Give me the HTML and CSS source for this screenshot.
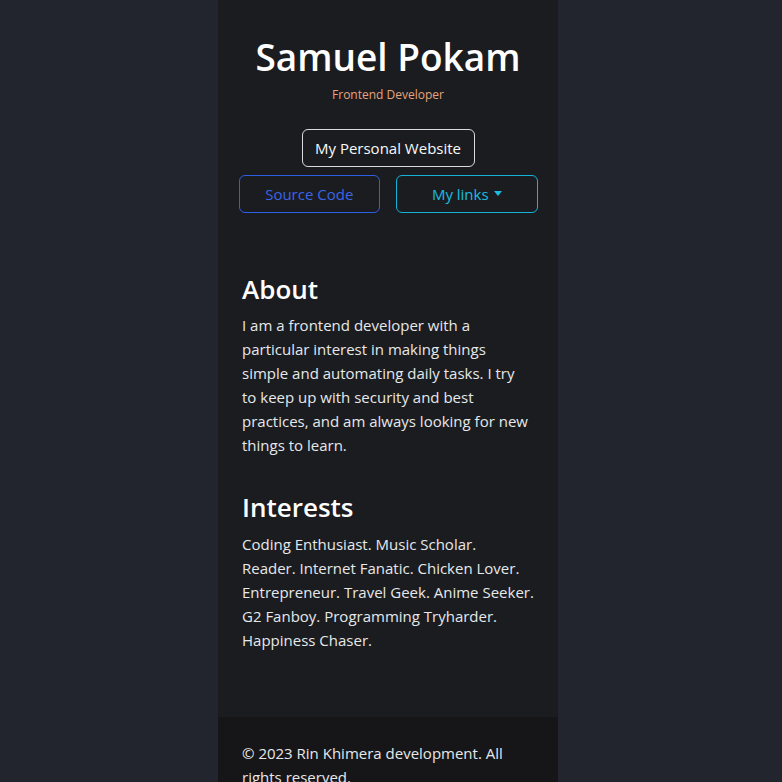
FILE: index.html
```html
<!DOCTYPE html>
<html lang="en">
<head>
<meta charset="utf-8">
<title>Samuel Pokam</title>
<link rel="stylesheet" href="styles.css">
</head>
<body>
<div class="page">
  <main class="column">
    <header class="hero">
      <h1 class="name">Samuel Pokam</h1>
      <p class="role">Frontend Developer</p>
      <a class="btn btn-light" href="#">My Personal Website</a>
      <div class="btn-row">
        <a class="btn btn-primary" href="#">Source Code</a>
        <a class="btn btn-info" href="#">My links<span class="caret"></span></a>
      </div>
    </header>
    <section class="section about">
      <h2 class="heading">About</h2>
      <p class="text">I am a frontend developer with a particular interest in making things simple and automating daily tasks. I try to&nbsp;keep up with security and best practices, and am always looking for new things to learn.</p>
    </section>
    <section class="section interests">
      <h2 class="heading">Interests</h2>
      <p class="text">Coding Enthusiast. Music Scholar. Reader.&nbsp;Internet Fanatic. Chicken Lover. Entrepreneur. Travel Geek. Anime Seeker. G2 Fanboy. Programming Tryharder. Happiness Chaser.</p>
    </section>
    <footer class="footer">
      <p class="text">© 2023 Rin Khimera development. All rights reserved.</p>
    </footer>
  </main>
</div>
</body>
</html>
```
FILE: styles.css
```css
* { box-sizing: border-box; }
html, body { margin: 0; padding: 0; }
body {
  background: #22252d;
  font-family: "Open Sans", "Noto Sans", sans-serif;
  color: #dee2e6;
  padding-right: 6px;
}
.page { display: flex; justify-content: center; }
.column {
  width: 340px;
  background: #1b1c20;
  min-height: 782px;
  display: flex;
  flex-direction: column;
}
.hero {
  display: flex;
  flex-direction: column;
  align-items: center;
  padding-top: 33px;
}
.name {
  margin: 0;
  font-size: 37px;
  line-height: 48px;
  font-weight: 600;
  color: #ffffff;
}
.role {
  margin: 4px 0 0;
  font-size: 12px;
  line-height: 19px;
  color: #e6a47c;
}
.btn {
  display: inline-flex;
  align-items: center;
  justify-content: center;
  height: 38px;
  border: 1px solid;
  border-radius: 6px;
  font-size: 15px;
  text-decoration: none;
}
.btn-light {
  margin-top: 25px;
  width: 173px;
  border-color: #d9dadc;
  color: #f8f9fa;
}
.btn-row {
  display: flex;
  gap: 16px;
  margin-top: 8px;
  width: 299px;
}
.btn-row .btn { flex: 1; }
.btn-primary { border-color: #2e5ee6; color: #3964ea; }
.btn-info { border-color: #14b4d8; color: #19bde0; }
.caret {
  display: inline-block;
  margin-left: 5px;
  border-top: 5px solid currentColor;
  border-left: 4.5px solid transparent;
  border-right: 4.5px solid transparent;
  position: relative;
  top: -1px;
}
.section { padding: 0 24px; }
.about { margin-top: 57px; }
.interests { margin-top: 31px; }
.heading {
  margin: 0 0 5px;
  font-size: 26px;
  line-height: 38px;
  font-weight: 600;
  color: #ffffff;
}
.interests .heading { margin-bottom: 6px; }
.text {
  margin: 0;
  font-size: 15px;
  line-height: 24px;
  color: #e6e8ea;
}
.footer {
  margin-top: 65px;
  background: #161618;
  padding: 24px 24px 24px;
  flex: 1;
}
```
